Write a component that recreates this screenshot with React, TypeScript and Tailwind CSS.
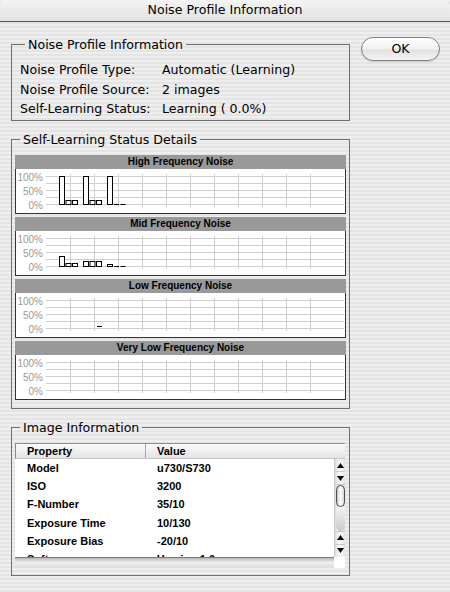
import React from "react";

type ChartDef = {
  title: string;
  bars: number[][];
  dashes?: { x: number; y: number; w: number }[];
};

const CHARTS: ChartDef[] = [
  {
    title: "High Frequency Noise",
    bars: [
      [1, 0.14, 0.14],
      [1, 0.14, 0.14],
      [1, 0, 0],
    ],
  },
  {
    title: "Mid Frequency Noise",
    bars: [
      [0.36, 0.1, 0.1],
      [0.18, 0.18, 0.18],
      [0.06, 0, 0],
    ],
  },
  {
    title: "Low Frequency Noise",
    bars: [],
    dashes: [{ x: 81, y: 33.5, w: 5 }],
  },
  { title: "Very Low Frequency Noise", bars: [] },
];

const LINE_YS = [7.5, 14.5, 21.5, 28.5, 35.5];
const ZERO = 35.5;
const RANGE = 28;
const BAR_X = [43.5, 50, 56.5];

function ChartPanel({ def }: { def: ChartDef }) {
  const verticals = Array.from({ length: 11 }, (_, k) => 54.5 + 24 * k);
  return (
    <div className="flex flex-col">
      <div className="h-[14px] bg-[#999999] text-center font-['Liberation_Sans',sans-serif] text-[10px] font-bold leading-[14px] text-black">
        {def.title}
      </div>
      <div className="h-[45px] border-x border-b border-[#333333] bg-white">
        <svg width="328" height="44" className="block">
          {LINE_YS.map((y) => (
            <line key={y} x1={30} x2={328} y1={y} y2={y} stroke="#cfcfcf" strokeWidth={1} />
          ))}
          {verticals.map((x) => (
            <line key={x} x1={x} x2={x} y1={5} y2={38} stroke="#cfcfcf" strokeWidth={1} />
          ))}
          {[
            { t: "100%", y: LINE_YS[0] },
            { t: "50%", y: LINE_YS[2] },
            { t: "0%", y: LINE_YS[4] },
          ].map((l) => (
            <text
              key={l.t}
              x={27}
              y={l.y + 4}
              textAnchor="end"
              fontSize={10}
              fill="#9a9a9a"
              fontFamily="'Liberation Sans', sans-serif"
            >
              {l.t}
            </text>
          ))}
          {def.bars.map((group, g) =>
            group.map((v, i) => {
              const x = BAR_X[i] + 24 * g;
              const h = Math.round(v * RANGE);
              if (h === 0) {
                return (
                  <line
                    key={`${g}-${i}`}
                    x1={x}
                    x2={x + 5}
                    y1={ZERO}
                    y2={ZERO}
                    stroke="#000"
                    strokeWidth={1}
                  />
                );
              }
              return (
                <rect
                  key={`${g}-${i}`}
                  x={x}
                  y={ZERO - h}
                  width={5}
                  height={h}
                  fill="#fff"
                  stroke="#000"
                  strokeWidth={1}
                />
              );
            })
          )}
          {def.dashes?.map((d, i) => (
            <line key={i} x1={d.x} x2={d.x + d.w} y1={d.y} y2={d.y} stroke="#000" strokeWidth={1} />
          ))}
        </svg>
      </div>
    </div>
  );
}

function Group({
  title,
  className,
  children,
}: {
  title: string;
  className: string;
  children: React.ReactNode;
}) {
  return (
    <fieldset className={"m-0 min-w-0 border border-[#707070] " + className}>
      <legend className="ml-[5px] px-[3px] text-[12.6px] leading-[15px]">{title}</legend>
      {children}
    </fieldset>
  );
}

function Arrow({ up }: { up?: boolean }) {
  return (
    <div className="flex h-[13px] shrink-0 items-center justify-center border-b border-[#c9c9c9]">
      <svg width="7" height="5" className="block">
        {up ? <polygon points="3.5,0 7,5 0,5" fill="#000" /> : <polygon points="0,0 7,0 3.5,5" fill="#000" />}
      </svg>
    </div>
  );
}

const ROWS: [string, string][] = [
  ["Model", "u730/S730"],
  ["ISO", "3200"],
  ["F-Number", "35/10"],
  ["Exposure Time", "10/130"],
  ["Exposure Bias", "-20/10"],
  ["Software", "Version 1.0"],
];

export default function App() {
  return (
    <div className="h-[592px] w-[450px] overflow-hidden bg-[repeating-linear-gradient(to_bottom,#eeeeee_0px,#eeeeee_2px,#e4e4e4_2px,#e4e4e4_4px)] font-['DejaVu_Sans',sans-serif] text-black">
      <div className="flex h-[22px] items-center justify-center rounded-t-[6px] border-b border-[#555555] bg-[linear-gradient(to_bottom,#f4f4f4,#e2e2e2)] text-[12.6px] leading-none">
        Noise Profile Information
      </div>
      <div className="flex items-start gap-[11px] pl-[11px] pt-[15px]">
        <div className="flex w-[339px] flex-col gap-[11px]">
          <Group title="Noise Profile Information" className="pb-[1px] pl-[8px] pt-[8px]">
            <div className="flex flex-col text-[12.6px] leading-[19.5px]">
              <div className="flex">
                <span className="w-[142px]">Noise Profile Type:</span>
                <span>Automatic (Learning)</span>
              </div>
              <div className="flex">
                <span className="w-[142px]">Noise Profile Source:</span>
                <span>2 images</span>
              </div>
              <div className="flex">
                <span className="w-[142px]">Self-Learning Status:</span>
                <span>Learning ( 0.0%)</span>
              </div>
            </div>
          </Group>

          <Group title="Self-Learning Status Details" className="px-[3px] pb-[7.5px] pt-[8.5px]">
            <div className="flex flex-col gap-[3px]">
              {CHARTS.map((c) => (
                <ChartPanel key={c.title} def={c} />
              ))}
            </div>
          </Group>

          <Group title="Image Information" className="px-[3px] pb-[7px] pt-[8.5px]">
            <div className="w-[330px] font-['Liberation_Sans',sans-serif] text-[11px] font-bold">
              <div className="flex h-[16px] items-center border-l border-t border-b border-[#8c8c8c] border-b-[#c4c4c4] bg-[linear-gradient(to_bottom,#fbfbfb,#e3e3e3)]">
                <div className="flex h-full w-[130px] items-center border-r border-[#a8a8a8] pl-[11px]">Property</div>
                <div className="pl-[11px]">Value</div>
              </div>
              <div className="flex">
                <div className="h-[97.5px] w-[319px] overflow-hidden bg-white">
                  {ROWS.map(([k, v]) => (
                    <div key={k} className="flex h-[18.25px] items-center">
                      <div className="w-[131px] pl-[12px]">{k}</div>
                      <div className="pl-[11px]">{v}</div>
                    </div>
                  ))}
                </div>
                <div className="flex h-[97.5px] w-[11px] flex-col border-l border-[#c9c9c9] bg-[linear-gradient(to_right,#dedede,#fafafa_50%,#e4e4e4)]">
                  <Arrow up />
                  <Arrow />
                  <div className="mx-auto h-[22px] w-[9px] shrink-0 rounded-full border border-[#4a4a4a] bg-[linear-gradient(to_right,#c8c8c8,#ffffff_50%,#d4d4d4)]" />
                  <div className="mx-auto w-[9px] flex-1 rounded-b-full bg-[linear-gradient(to_bottom,#f4f4f4,#c9c9c9)]" />
                  <div className="border-t border-[#c9c9c9]" />
                  <Arrow up />
                  <div className="flex h-[12px] shrink-0 items-center justify-center">
                    <svg width="7" height="5" className="block">
                      <polygon points="0,0 7,0 3.5,5" fill="#000" />
                    </svg>
                  </div>
                </div>
              </div>
              <div className="flex h-[11.5px]">
                <div className="w-[319px] border-t border-[#7a7a7a] bg-[linear-gradient(to_bottom,#b9b9b9,#ededed_45%,#dcdcdc)]" />
                <div className="w-[11px] bg-white" />
              </div>
            </div>
          </Group>
        </div>

        <button className="h-[24px] w-[79px] rounded-full border border-[#808080] bg-[linear-gradient(to_bottom,#ffffff,#f0f0f0_50%,#e0e0e0_55%,#f6f6f6)] text-[12.6px] leading-none text-black shadow-[0_1px_1px_rgba(0,0,0,0.15)]">
          OK
        </button>
      </div>
    </div>
  );
}
